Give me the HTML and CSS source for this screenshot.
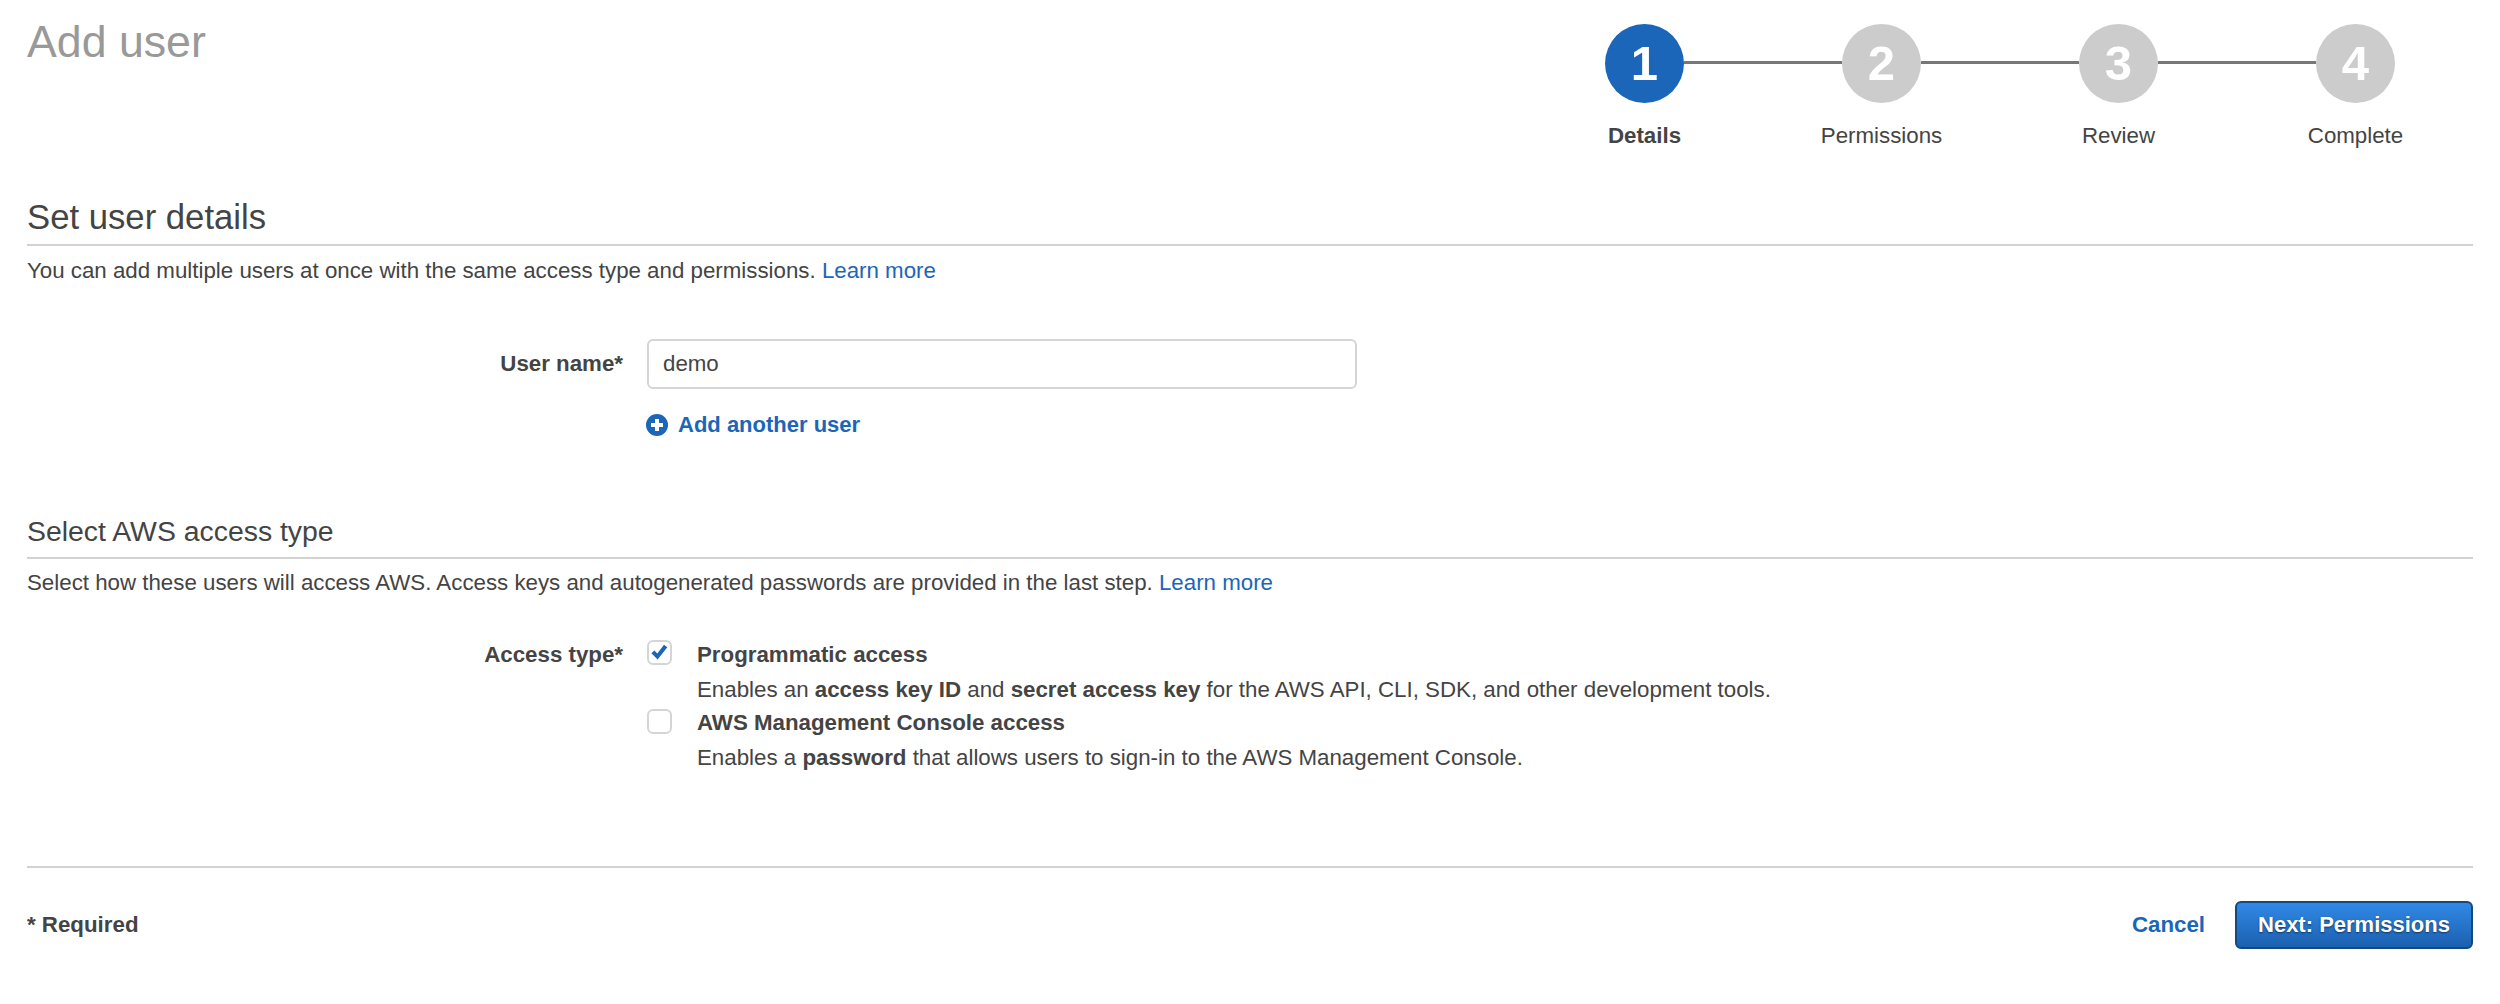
FILE: index.html
```html
<!DOCTYPE html>
<html lang="en">
<head>
<meta charset="utf-8">
<title>Add user</title>
<link rel="stylesheet" href="styles.css">
</head>
<body>
<main class="page">
  <header class="top">
    <h1 class="title">Add user</h1>
    <ol class="stepper">
      <li class="step step-active"><span class="step-dot">1</span><span class="step-label">Details</span></li>
      <li class="step-line"></li>
      <li class="step"><span class="step-dot">2</span><span class="step-label">Permissions</span></li>
      <li class="step-line"></li>
      <li class="step"><span class="step-dot">3</span><span class="step-label">Review</span></li>
      <li class="step-line"></li>
      <li class="step"><span class="step-dot">4</span><span class="step-label">Complete</span></li>
    </ol>
  </header>

  <section class="section-details">
    <h2 class="heading">Set user details</h2>
    <p class="desc">You can add multiple users at once with the same access type and permissions. <a class="link" href="#">Learn more</a></p>
    <div class="form-row row-name">
      <label class="form-label label-name" for="username">User name*</label>
      <div class="form-field">
        <input class="text-input" id="username" type="text" value="demo">
        <a class="add-link" href="#">
          <svg class="add-icon" viewBox="0 0 22 22" width="22" height="22" aria-hidden="true"><circle cx="11" cy="11" r="11" fill="#1b66b8"/><path d="M11 5v12M5 11h12" stroke="#fff" stroke-width="4" fill="none"/></svg>
          <span>Add another user</span>
        </a>
      </div>
    </div>
  </section>

  <section class="section-access">
    <h3 class="subheading">Select AWS access type</h3>
    <p class="desc desc-tight">Select how these users will access AWS. Access keys and autogenerated passwords are provided in the last step. <a class="link" href="#">Learn more</a></p>
    <div class="form-row row-access">
      <span class="form-label label-access">Access type*</span>
      <div class="options">
        <div class="option">
          <span class="checkbox checkbox-on">
            <svg viewBox="0 0 25 25" width="25" height="25" aria-hidden="true"><path d="M4.4 13.2l3-2.8 2.9 3 6.7-8.6 3.3 2.5-9.7 12.2z" fill="#1b66b8"/></svg>
          </span>
          <div class="option-text">
            <div class="option-title">Programmatic access</div>
            <div class="option-desc">Enables an <b>access key ID</b> and <b>secret access key</b> for the AWS API, CLI, SDK, and other development tools.</div>
          </div>
        </div>
        <div class="option">
          <span class="checkbox"></span>
          <div class="option-text">
            <div class="option-title">AWS Management Console access</div>
            <div class="option-desc">Enables a <b>password</b> that allows users to sign-in to the AWS Management Console.</div>
          </div>
        </div>
      </div>
    </div>
  </section>

  <footer class="footer">
    <span class="required">* Required</span>
    <div class="actions">
      <a class="cancel" href="#">Cancel</a>
      <button class="primary" type="button">Next: Permissions</button>
    </div>
  </footer>
</main>
</body>
</html>
```

FILE: styles.css
```css
* { box-sizing: border-box; }
html, body { margin: 0; padding: 0; background: #fff; }
body {
  font-family: "Liberation Sans", Arial, sans-serif;
  font-size: 22.3px;
  color: #444;
  height: 1004px;
  overflow: hidden;
}
.page { padding: 0 27px; }
.top { display: flex; justify-content: space-between; height: 194px; }
.title {
  margin: 17px 0 0;
  font-size: 44.7px;
  line-height: 50px;
  font-weight: 400;
  color: #999;
}
.stepper {
  display: flex;
  list-style: none;
  margin: 24px 78px 0 0;
  padding: 0;
  width: 790px;
}
.step { display: flex; flex-direction: column; align-items: center; width: 79px; flex: none; }
.step-dot {
  width: 79px;
  height: 79px;
  border-radius: 50%;
  background: #ccc;
  color: #fff;
  font-size: 49px;
  font-weight: 700;
  line-height: 79px;
  text-align: center;
}
.step-active .step-dot { background: #1b66b8; }
.step-label { margin-top: 20px; line-height: 26px; white-space: nowrap; }
.step-active .step-label { font-weight: 700; }
.step-line { flex: 1; height: 3px; margin-top: 37px; background: #777; }
.heading {
  margin: 0;
  font-size: 34.7px;
  line-height: 46px;
  font-weight: 400;
  color: #444;
  height: 52px;
  border-bottom: 2px solid #d2d2d2;
}
.desc { margin: 0; padding-top: 12px; line-height: 26px; }
.desc-tight { padding-top: 11px; }
.link { color: #1b66b8; text-decoration: none; }
.form-row { display: flex; }
.form-label { width: 596px; text-align: right; font-weight: 700; flex: none; }
.form-field, .options { margin-left: 24px; }
.row-name { margin-top: 55px; }
.label-name { line-height: 50px; }
.text-input {
  display: block;
  width: 710px;
  height: 50px;
  padding: 0 14px;
  border: 2px solid #d5d5d5;
  border-radius: 6px;
  font: 22.3px "Liberation Sans", Arial, sans-serif;
  color: #444;
  background: #fff;
}
.add-link {
  display: flex;
  align-items: center;
  gap: 10px;
  margin: 23px 0 0 -1px;
  line-height: 26px;
  font-size: 22px;
  font-weight: 700;
  color: #1b66b8;
  text-decoration: none;
}
.section-access { margin-top: 76px; }
.subheading {
  margin: 0;
  font-size: 28.4px;
  line-height: 34px;
  font-weight: 400;
  color: #444;
  height: 45px;
  border-bottom: 2px solid #d2d2d2;
}
.row-access { margin-top: 46px; }
.label-access { line-height: 26px; }
.options { display: flex; flex-direction: column; gap: 7px; }
.option { display: flex; gap: 25px; }
.checkbox {
  flex: none;
  width: 25px;
  height: 25px;
  margin-top: -1px;
  border: 2px solid #d5d5d5;
  border-radius: 6px;
  background: #fff;
}
.checkbox-on { margin-top: -2px; }
.checkbox svg { display: block; margin: -2px; }
.option-title { font-weight: 700; line-height: 26px; }
.option-desc { margin-top: 9px; line-height: 26px; }
.footer {
  margin-top: 95px;
  border-top: 2px solid #d2d2d2;
  padding-top: 33px;
  display: flex;
  justify-content: space-between;
  align-items: center;
}
.required { font-weight: 700; }
.actions { display: flex; align-items: center; gap: 30px; }
.cancel { font-weight: 700; color: #1b66b8; text-decoration: none; }
.primary {
  width: 238px;
  height: 48px;
  padding: 0;
  border: 2px solid #14497f;
  border-radius: 6px;
  background: linear-gradient(#3189e6, #1b60b0);
  color: #fff;
  font: 700 22px "Liberation Sans", Arial, sans-serif;
  text-shadow: 0 1px 2px rgba(0,0,0,.55);
}
```
